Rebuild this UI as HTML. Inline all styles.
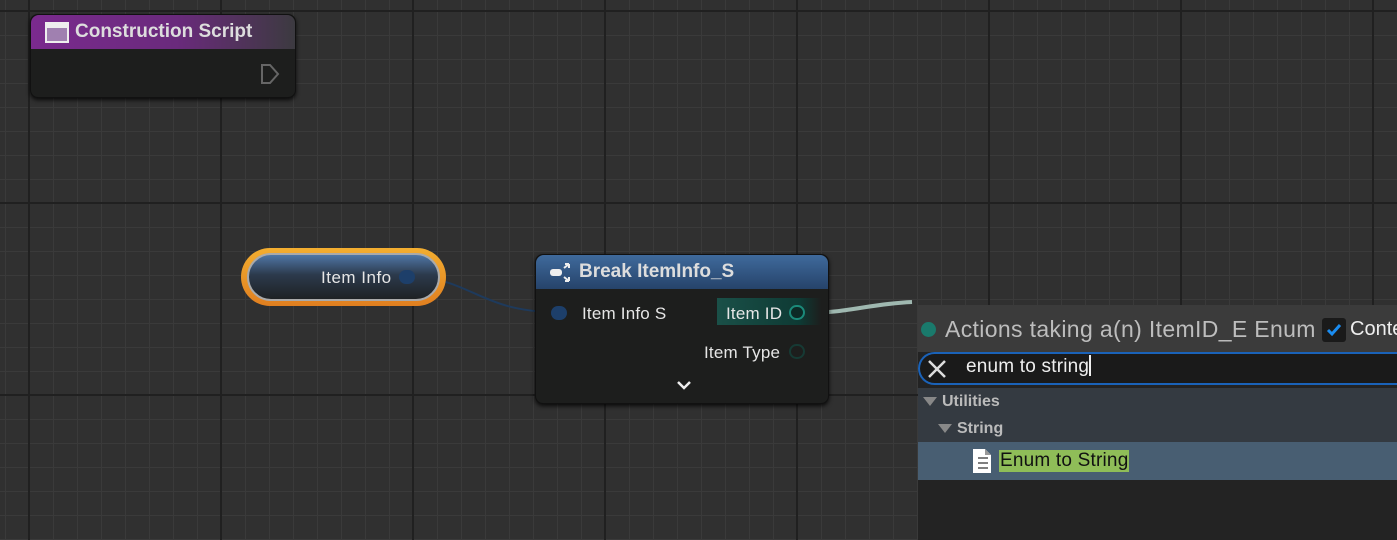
<!DOCTYPE html>
<html><head><meta charset="utf-8">
<style>
*{margin:0;padding:0;box-sizing:border-box}
body{width:1397px;height:540px;overflow:hidden;position:relative;font-family:"Liberation Sans",sans-serif;
background-color:#303030;
background-image:
linear-gradient(to right,#202020 0,#202020 2px,transparent 2px),
linear-gradient(to bottom,#202020 0,#202020 2px,transparent 2px),
linear-gradient(to right,#3a3a3a 0,#3a3a3a 1px,transparent 1px),
linear-gradient(to bottom,#3a3a3a 0,#3a3a3a 1px,transparent 1px);
background-size:192px 192px,192px 192px,24px 24px,24px 24px;
background-position:28px 10px,28px 10px,5px 11px,5px 11px;}
.abs{position:absolute}
.node{position:absolute;background:#1d1e1d;border-radius:8px;box-shadow:0 2px 4px rgba(0,0,0,.8);border:1px solid #111}
.t{color:#e6e6e6;font-size:17px;letter-spacing:0.2px}
</style></head><body>
<svg class="abs" style="left:0;top:0" width="1397" height="540">
<path d="M410 277 C470 277,480 312,556 312" stroke="#1e3a5c" stroke-width="2" fill="none"/>
<path d="M812 313 C850 312,870 304,912 302" stroke="#9fb8b0" stroke-width="4" fill="none"/>
</svg>

<div class="node" style="left:30px;top:14px;width:266px;height:84px;">
 <div style="height:34px;border-radius:8px 8px 0 0;background:linear-gradient(to right,#7a2a8e 0%,#6a2a7c 55%,#3c3a40 100%);"></div>
 <div class="abs" style="left:14px;top:7px;width:24px;height:21px;border:2px solid #eee;background:#a080b0;border-top-width:6px"></div>
 <div class="abs" style="left:44px;top:6px;color:#ddd;font-weight:bold;font-size:19px">Construction Script</div>
 <svg class="abs" style="left:229px;top:49px" width="22" height="22"><path d="M2 1 H10 L18 10 L10 19 H2 Z" fill="none" stroke="#666" stroke-width="2"/></svg>
</div>

<div class="abs" style="left:241px;top:248px;width:205px;height:58px;border-radius:29px;background:linear-gradient(#f3ae30,#e07f20);"></div>
<div class="abs" style="left:247px;top:253px;width:193px;height:48px;border-radius:24px;background:linear-gradient(#4f76a6 0%,#2c3a4c 45%,#1e2224 100%);border:2px solid #aaa"></div>
<div class="abs t" style="left:321px;top:268px;letter-spacing:0.5px">Item Info</div>
<div class="abs" style="left:399px;top:270px;width:16px;height:14px;border-radius:7px;background:#1d3f6a"></div>

<div class="node" style="left:535px;top:254px;width:294px;height:150px;">
 <div style="height:34px;border-radius:8px 8px 0 0;background:linear-gradient(#3f6a9c,#26436a);"></div>
 <svg class="abs" style="left:14px;top:8px" width="24" height="20"><rect x="0" y="6" width="12" height="7" rx="3" fill="#eee"/><path d="M14 5 L19 1 M19 1 h-4 M19 1 v4 M14 14 L19 18 M19 18 h-4 M19 18 v-4" stroke="#eee" stroke-width="2" fill="none"/></svg>
 <div class="abs" style="left:43px;top:6px;color:#ddd;font-weight:bold;font-size:19px">Break ItemInfo_S</div>
 <div class="abs" style="left:15px;top:51px;width:16px;height:14px;border-radius:7px;background:#1d3f6a"></div>
 <div class="abs t" style="left:46px;top:49px">Item Info S</div>
 <div class="abs" style="left:181px;top:43px;width:104px;height:27px;background:linear-gradient(to right,#1a5048,#0e3a34 80%,transparent)"></div>
 <div class="abs t" style="left:190px;top:49px">Item ID</div>
 <div class="abs" style="left:253px;top:50px;width:16px;height:15px;border-radius:8px;border:2px solid #1b8a7a;background:#0c2a26"></div>
 <div class="abs t" style="left:168px;top:88px">Item Type</div>
 <div class="abs" style="left:253px;top:89px;width:16px;height:15px;border-radius:8px;border:2px solid #163a34"></div>
 <svg class="abs" style="left:140px;top:125px" width="16" height="12"><path d="M2 2 L8 8 L14 2" stroke="#eee" stroke-width="2.5" fill="none"/></svg>
</div>

<div class="abs" style="left:918px;top:305px;width:479px;height:235px;background:#232323">
 <div class="abs" style="left:0;top:0;width:479px;height:47px;background:#3b3b3b"></div>
 <div class="abs" style="left:3px;top:17px;width:15px;height:15px;border-radius:50%;background:#1a7a6c"></div>
 <div class="abs" style="left:27px;top:11px;color:#bdbdbd;font-size:23px;letter-spacing:0.35px;white-space:nowrap">Actions taking a(n) ItemID_E Enum</div>
 <div class="abs" style="left:404px;top:13px;width:24px;height:24px;background:#1a1a1a;border-radius:3px"></div>
 <svg class="abs" style="left:408px;top:17px" width="16" height="16"><path d="M2 8 L6 12 L14 3" stroke="#1a8cf0" stroke-width="3" fill="none"/></svg>
 <div class="abs" style="left:432px;top:13px;color:#eee;font-size:20px;white-space:nowrap">Conte</div>
 <div class="abs" style="left:0;top:47px;width:479px;height:33px;background:#1a1a1a;border:2px solid #1a62b8;border-right:none;border-radius:17px 0 0 17px"></div>
 <svg class="abs" style="left:8px;top:53px" width="22" height="22"><path d="M3 3 L19 19 M19 3 L3 19" stroke="#ddd" stroke-width="2.5"/></svg>
 <div class="abs" style="left:48px;top:50px;color:#eee;font-size:19px;letter-spacing:0.2px">enum to string<span style="display:inline-block;width:1.5px;height:21px;background:#eee;vertical-align:-4px"></span></div>
 <div class="abs" style="left:0;top:83px;width:479px;height:54px;background:#343a41"></div>
 <svg class="abs" style="left:5px;top:92px" width="14" height="10"><path d="M0 0 H14 L7 9 Z" fill="#888"/></svg>
 <div class="abs" style="left:24px;top:88px;color:#bbb;font-weight:bold;font-size:16px">Utilities</div>
 <svg class="abs" style="left:20px;top:119px" width="14" height="10"><path d="M0 0 H14 L7 9 Z" fill="#888"/></svg>
 <div class="abs" style="left:39px;top:115px;color:#bbb;font-weight:bold;font-size:16px">String</div>
 <div class="abs" style="left:0;top:137px;width:479px;height:38px;background:#485e72"></div>
 <svg class="abs" style="left:55px;top:144px" width="18" height="24"><path d="M0 0 H12 L18 6 V24 H0 Z" fill="#fff"/><path d="M12 0 V6 H18" fill="#999"/><path d="M5 9 h10 M5 14 h10 M5 19 h10" stroke="#555" stroke-width="1.5"/></svg>
 <div class="abs" style="left:81px;top:145px;height:22px;padding:0 1px;background:#8fbd58;color:#111;font-size:19px;line-height:22px;letter-spacing:0.2px">Enum to String</div>
</div>
</body></html>
